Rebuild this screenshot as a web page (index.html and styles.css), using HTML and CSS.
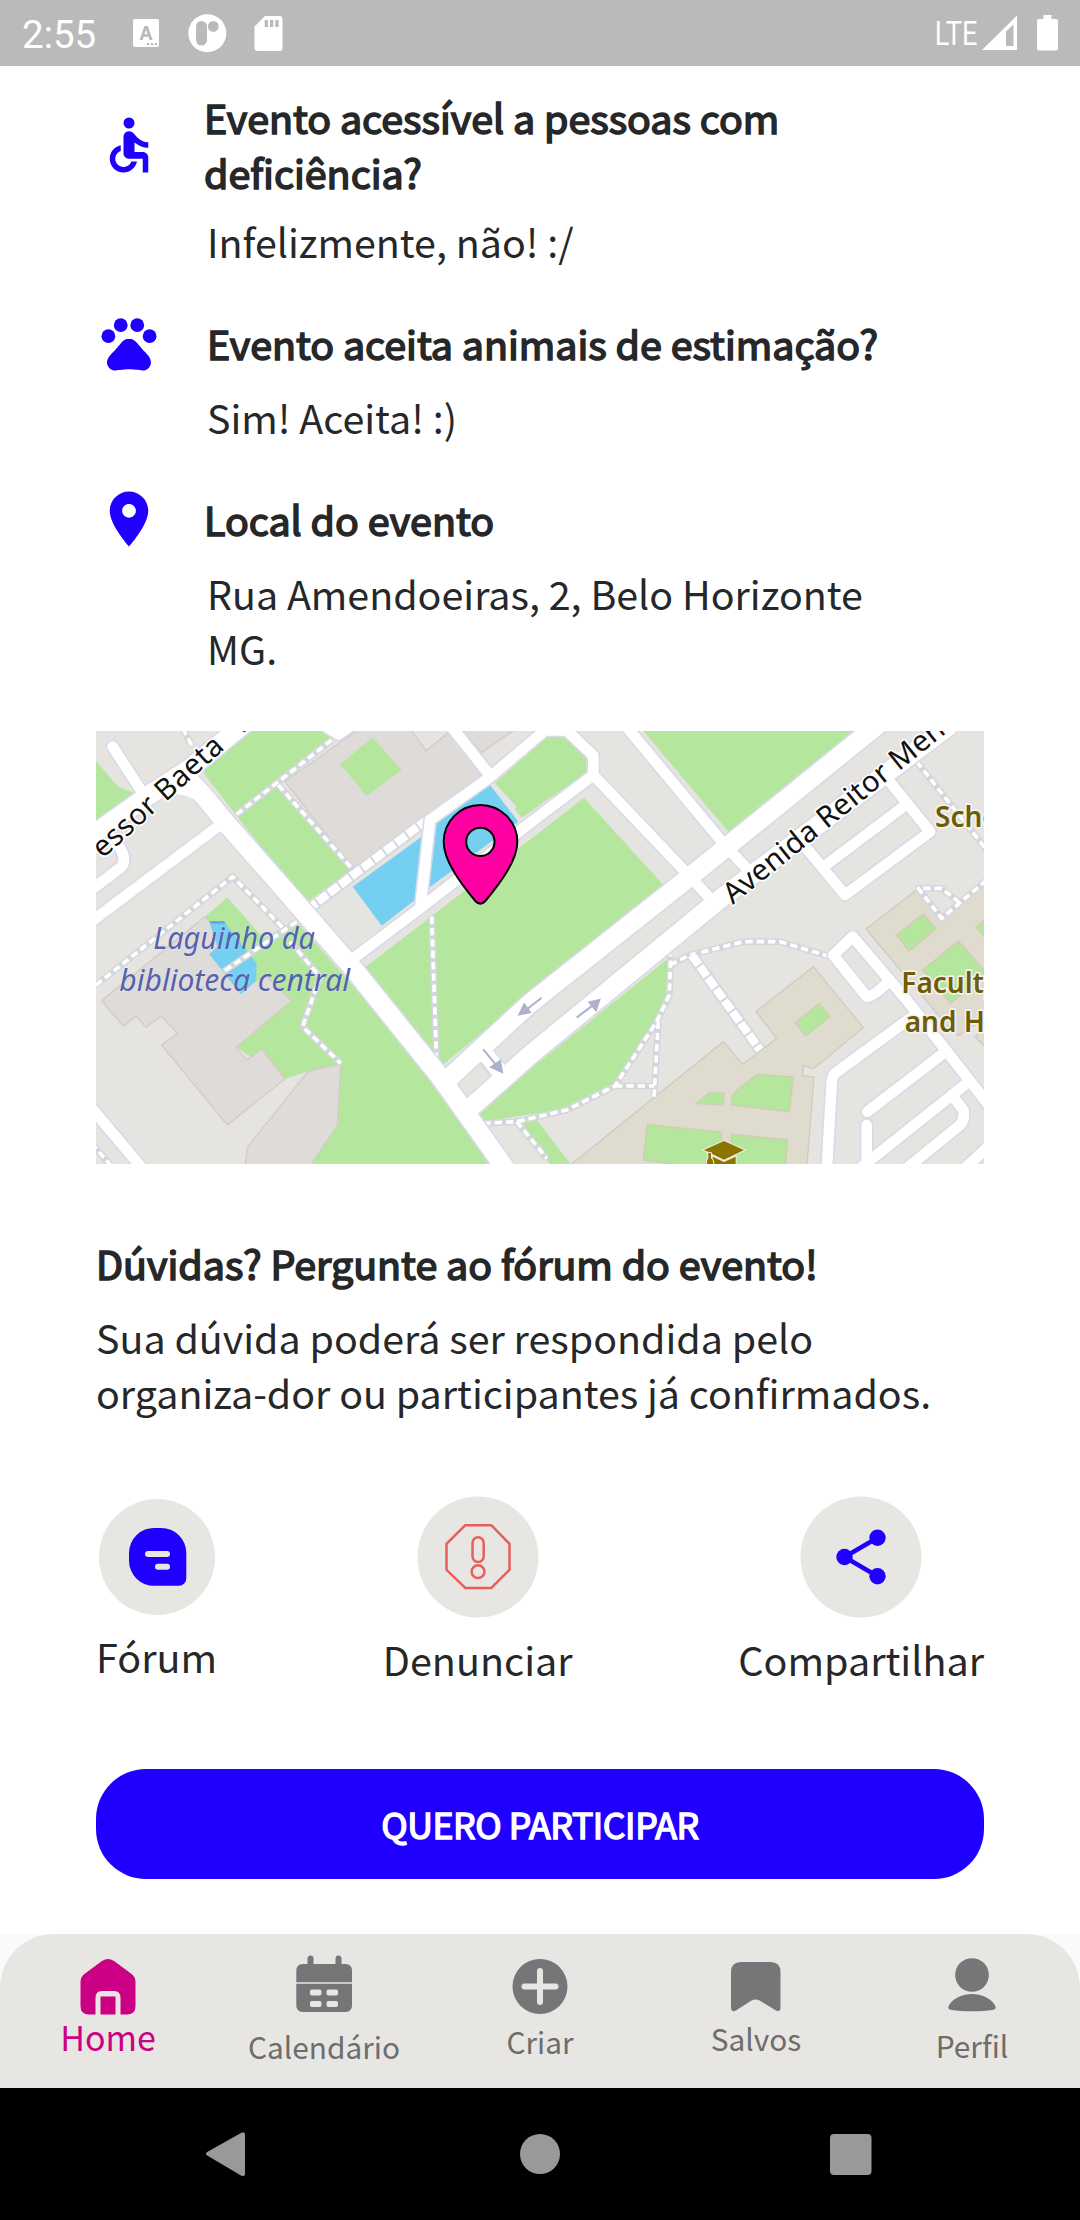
FILE: index.html
```html
<!DOCTYPE html>
<html lang="pt-BR">
<head>
<meta charset="utf-8">
<title>Evento</title>
<link rel="stylesheet" href="styles.css">
</head>
<body>
<header class="status">
  <span class="clock">2:55</span>
  <svg class="status-icons" viewBox="133 12 152 42" width="152" height="42" fill="#fff">
    <path fill-rule="evenodd" d="M135 19h22a2 2 0 0 1 2 2v24a2 2 0 0 1-2 2h-22a2 2 0 0 1-2-2V21a2 2 0 0 1 2-2zM144.500 26l-5 14h3.200l1-3.200h4.800l1 3.200h3.200l-5-14zM146 29.500l1.500 4.800h-3zM147 43v2.200h2.200V43zM151 43v2.200h2.200V43zM155 43v2.200h2V43z"/>
    <path fill-rule="evenodd" d="M207.300 14.300a19 19 0 1 1 0 38 19 19 0 0 1 0-38zM201.500 21a5.500 5.500 0 0 0-5.500 5.500v13.500a5.500 5.500 0 0 0 11 0V26.500a5.500 5.500 0 0 0-5.500-5.500zM213.300 21a5.400 5.400 0 1 0 0 10.800 5.400 5.400 0 0 0 0-10.800z"/>
    <path fill-rule="evenodd" d="M265 16h14.500a3 3 0 0 1 3 3v29a3 3 0 0 1-3 3h-22a3 3 0 0 1-3-3V26.500zM264.700 20v7h3.300v-7zM270 20v7h3.300v-7zM275.300 20v7h3.300v-7z"/>
  </svg>
  <span class="lte">LTE</span>
  <svg class="signal" viewBox="982 12 78 42" width="78" height="42" fill="#fff">
    <path fill-rule="evenodd" d="M1017 15.500V50H982zM1013.500 24.500L1006 31.500V46h7.500z"/>
    <path d="M1043.500 15h8v4h4.500a2 2 0 0 1 2 2v27.500a2 2 0 0 1-2 2h-17a2 2 0 0 1-2-2V21a2 2 0 0 1 2-2h4.500z"/>
  </svg>
</header>

<main class="content">
  <section class="info access">
    <svg class="info-icon" viewBox="0 0 24 24"><circle cx="12" cy="4" r="2"/><path d="M19 13v-2c-1.540.020-3.090-.750-4.070-1.830l-1.290-1.430c-.170-.190-.380-.340-.610-.450-.010 0-.010-.010-.020-.010H13c-.350-.200-.750-.300-1.190-.260C10.760 7.110 10 8.040 10 9.090V15c0 1.100.900 2 2 2h5v5h2v-5.500c0-1.100-.900-2-2-2h-3v-3.450c1.290 1.070 3.250 1.940 5 1.950zm-6.170 5c-.410 1.160-1.520 2-2.830 2-1.660 0-3-1.340-3-3 0-1.310.840-2.410 2-2.830V12.100c-2.280.460-4 2.480-4 4.900 0 2.760 2.240 5 5 5 2.420 0 4.440-1.720 4.900-4h-2.070z"/></svg>
    <div class="info-text">
      <h2 class="title">Evento acessível a pessoas com<br>deficiência?</h2>
      <p class="text">Infelizmente, não! :/</p>
    </div>
  </section>
  <section class="info pets">
    <svg class="info-icon" viewBox="0 0 24 24"><circle cx="4.500" cy="9.500" r="2.500"/><circle cx="9" cy="5.500" r="2.500"/><circle cx="15" cy="5.500" r="2.500"/><circle cx="19.500" cy="9.500" r="2.500"/><path d="M17.340 14.860c-.870-1.020-1.600-1.890-2.480-2.910-.460-.540-1.050-1.080-1.750-1.320-.110-.040-.220-.070-.330-.090-.250-.040-.520-.040-.780-.040s-.530 0-.790.050c-.110.020-.220.050-.330.090-.700.240-1.280.780-1.750 1.320-.870 1.020-1.600 1.890-2.480 2.910-1.310 1.310-2.920 2.760-2.620 4.790.290 1.020 1.020 2.030 2.330 2.320.730.150 3.060-.440 5.540-.440h.180c2.480 0 4.810.580 5.540.440 1.310-.290 2.040-1.310 2.330-2.320.310-2.040-1.300-3.490-2.610-4.800z"/></svg>
    <div class="info-text">
      <h2 class="title inset">Evento aceita animais de estimação?</h2>
      <p class="text">Sim! Aceita! :)</p>
    </div>
  </section>
  <section class="info place">
    <svg class="info-icon" viewBox="0 0 24 24"><path d="M12 2C8.130 2 5 5.130 5 9c0 5.250 7 13 7 13s7-7.750 7-13c0-3.870-3.130-7-7-7zm0 9.500c-1.380 0-2.500-1.120-2.500-2.500s1.120-2.500 2.500-2.500 2.500 1.120 2.500 2.500-1.120 2.500-2.500 2.500z"/></svg>
    <div class="info-text">
      <h2 class="title">Local do evento</h2>
      <p class="text">Rua Amendoeiras, 2, Belo Horizonte<br>MG.</p>
    </div>
  </section>

  <svg class="map" viewBox="18 18 2664 1299" width="888" height="433">
    <rect width="2700" height="1340" fill="#e5e4e0"/>
    <g class="green">
      <path d="M460 18H700L730 45 440 272 345 150 340 125zM440 272L570 180 785 435 645 535zM18 108L85 185 130 203 18 300zM1482 218L1720 480 1045 1030 815 735 1120 500zM1660 18H2290L1915 320zM1368 36H1425L1490 100V142L1295 278 1215 175z"/>
      <path d="M345 575L412 518 520 640 620 590 1050 1080 1200 1317H660L742 1200 752 1018 655 1038 585 1062 438 967 605 827zM1155 1165L1735 700 1728 810 1700 890 1575 1080 1440 1150 1180 1190zM1290 1195L1340 1185 1442 1317H1380z"/>
    </g>
    <g class="building">
      <path d="M585 170L810 10H960L1008 77 1078 20 1182 150 790 432zM1110 10H1280L1175 82z"/>
      <path d="M345 575L605 827 438 967 470 1005 515 972 585 1062 412 1200 215 960 263 925 213 873 168 907 138 873 100 903 35 827z"/>
      <path d="M655 1038L752 1018 742 1200 655 1330H465L473 1265z"/>
    </g>
    <path class="green" d="M345 575L412 518 520 640 620 590 720 740 605 827 540 740 500 770 440 690 400 640z"/>
    <path class="green" d="M848 38L935 135 830 212 750 118z"/>
    <g transform="translate(1320 0)">
      <g class="campus">
        <path d="M125 1317L375 1115 580 950 638 1018 740 940 678 860 850 725 1000 908 850 1032 820 1020 817 1052 852 1056 830 1330H110z"/>
        <path d="M1008 612L1165 490 1235 580 1380 470V870L1285 932 1250 900zM1335 935L1380 980V900z"/>
      </g>
      <g class="lawn">
        <path d="M795 895L868 835 900 875 828 932zM683 1047L790 1056 778 1160 603 1140 610 1105zM500 1135L538 1103 583 1105 578 1140zM352 1198L575 1222V1330H500L340 1305zM604 1227L773 1245 765 1330H604z"/>
        <path d="M1100 630L1180 567 1218 612 1137 678zM1338 607L1370 580V640zM1178 735L1285 648 1370 745 1262 835z"/>
      </g>
    </g>
    <g fill="#75cff0">
      <path d="M358 590H402L500 715 498 768 452 808 358 688 382 665z"/>
      <path d="M788 485L995 335 975 525 875 602zM1040 295L1200 180 1285 290 1015 490z"/>
      <path d="M358 588H402L408 596H362z" fill="#6aa5f0"/>
    </g>
    <path d="M1215 185L1275 250" stroke="#e5e4ea" stroke-width="14"/>

    <defs>
      <g id="paths">
        <path d="M725 45L440 268M565 180L790 435M278 10L305 60M18 780L428 455 580 610M620 590L400 740M600 650L690 755 638 905 752 1015M1025 575L1040 1020"/>
        <path d="M1180 1195L1280 1190 1430 1155 1575 1083 1700 890 1738 810 1742 690M1575 1083H1692M1692 1115L1705 890M1280 1190L1370 1300M5 1255L70 1330"/>
        <path d="M1740 720L1800 690 1960 650H2070L2220 695M2480 110L2690 375M2690 465L2555 580 2485 490H2555L2605 530"/>
      </g>
      <g id="plaza"><path d="M650 555L1010 285M1805 690L2010 975"/></g>
      <g id="lanes">
        <path d="M68 65L165 215M-10 600L390 300M-10 505L95 425Q110 405 92 372L70 340M-20 1120L165 1340"/>
        <path d="M1080 0L1195 145M1020 285L992 540M780 708L1000 542 1325 290 1510 150M1020 285L1195 160 1365 16H1430L1510 92V150L1800 455 1860 520M1605 0L1900 355 1970 430"/>
        <path d="M2395 165L2520 320 2265 510 2150 370M2215 415L2440 245M2288 635L2230 690 2330 815Q2350 815 2390 775M2288 635L2450 825 2700 1145"/>
        <path d="M2460 880L2235 1045Q2225 1055 2225 1075L2210 1340M2560 985L2332 1160M2630 1075L2310 1330M2330 1200V1340M2585 1110L2620 1155Q2625 1185 2610 1200L2450 1330M2700 1260L2630 1325M700 0L745 28 800-10"/>
      </g>
      <g id="roads">
        <path d="M-20 350L170 215 300 130 470 -10M290 160Q325 190 400 285L650 570 785 725 1050 1055 1260 1350M1060 1075L1320 835 1800 455 2375 -10M1140 1150L1320 990 1880 530 2580 0"/>
      </g>
    </defs>
    <use href="#paths" class="path-case"/><use href="#paths" class="path-fill"/>
    <use href="#plaza" class="plaza-case"/><use href="#plaza" class="plaza-fill"/>
    <use href="#lanes" class="lane-case"/><use href="#roads" class="road-case"/>
    <path d="M1165 965L1255 1075" stroke="#d8dae8" stroke-width="60"/>
    <use href="#lanes" class="lane-fill"/><use href="#roads" class="road-fill"/>
    <path d="M1165 960L1260 1080" stroke="#fff" stroke-width="48"/>
    <path d="M240 190L310 130 345 190 400 270 330 235Q290 205 240 205z" fill="#fff"/>

    <g stroke="#adb1cb" stroke-width="6" fill="#adb1cb">
      <path d="M1355 818L1305 857M1180 973L1222 1025M1460 878L1512 838"/>
      <path d="M1288 868L1303 838 1320 862zM1236 1041L1204 1026 1230 1008zM1528 825L1498 832 1518 856z"/>
    </g>
    <g transform="translate(1320 0)" fill="#8a7500" stroke="#f2efe6" stroke-width="6" paint-order="stroke">
      <path d="M522 1275L582 1248 642 1275 582 1304zM548 1295L582 1311 617 1295V1330H548z"/>
      <path d="M535 1283V1300Q528 1306 532 1330H550Q552 1306 543 1300V1285z"/>
    </g>
    <g class="map-street">
      <text x="38" y="402" transform="rotate(-42 38 402)" textLength="496">essor Baeta</text>
      <text x="446" y="36" transform="rotate(-40 446 36)">V</text>
      <text x="1928" y="540" transform="rotate(-38.800 1928 540)" textLength="825">Avenida Reitor Men</text>
    </g>
    <g class="map-water">
      <text x="190" y="672" textLength="485" lengthAdjust="spacingAndGlyphs">Laguinho da</text>
      <text x="88" y="798" textLength="692" lengthAdjust="spacingAndGlyphs">biblioteca central</text>
    </g>
    <g class="map-poi">
      <text x="2535" y="307">School</text>
      <text x="2434" y="803">Faculty</text>
      <text x="2444" y="920">and Hu</text>
    </g>
    <path d="M1171 240C1110 240 1061 290 1061 350 1061 405 1108 470 1156 528Q1171 545 1186 528C1234 470 1282 405 1282 350 1282 290 1232 240 1171 240zM1171 308a42.500 42.500 0 1 1 0 85 42.500 42.500 0 0 1 0-85z" fill="#ff00a2" fill-rule="evenodd" stroke="#000" stroke-width="6"/>
  </svg>

  <section class="forum">
    <h2 class="title">Dúvidas? Pergunte ao fórum do evento!</h2>
    <p class="text">Sua dúvida poderá ser respondida pelo<br>organiza-dor ou participantes já confirmados.</p>
  </section>

  <nav class="actions">
    <a class="action small">
      <svg viewBox="99 1499 116 116" width="116" height="116"><circle cx="157" cy="1557" r="58" fill="#e8e6e2"/><path fill="#1f00ff" d="M155 1528h6a25 25 0 0 1 25.300 25v25a7.500 7.500 0 0 1-7.500 7.800H154a25 25 0 0 1-25-25V1553a25 25 0 0 1 26-25z"/><path d="M148 1554h19M158 1566.700h9" stroke="#e8e6e2" stroke-width="6" stroke-linecap="round"/></svg>
      <span>Fórum</span>
    </a>
    <a class="action">
      <svg viewBox="416 1496 122 122" width="122" height="122"><circle cx="477" cy="1557" r="60.500" fill="#e8e6e2"/><g fill="none" stroke="#e65f5c" stroke-width="2.500"><path d="M464.300 1525.200h26l18.200 18.600v26l-18.200 18.200h-26l-18.800-18.200v-26z"/><rect x="471.500" y="1537.300" width="11.200" height="24.700" rx="5.600"/><circle cx="477" cy="1571.700" r="6.400"/></g></svg>
      <span>Denunciar</span>
    </a>
    <a class="action">
      <svg viewBox="799 1496 122 122" width="122" height="122"><circle cx="860" cy="1557" r="60.500" fill="#e8e6e2"/><g fill="#1f00ff"><circle cx="843.500" cy="1557" r="8.200"/><circle cx="876.500" cy="1537.700" r="8.200"/><circle cx="876.500" cy="1576.200" r="8.200"/></g><path d="M876.500 1537.700L843.500 1557l33 19.200" fill="none" stroke="#1f00ff" stroke-width="4.500"/></svg>
      <span>Compartilhar</span>
    </a>
  </nav>

  <button class="join">QUERO PARTICIPAR</button>
</main>

<footer class="tabs-wrap">
  <nav class="tabs">
    <a class="tab home">
      <svg viewBox="0 0 56 56"><path d="M28 0q3 0 6 2l17 12.500q4.500 3.500 4.500 8V47q0 8.500-8.500 8.500H40.500V39q0-7-6.500-7H22q-6.500 0-6.500 7v16.500H9Q.500 55.500.500 47V22.500q0-4.500 4.500-8L22 2q3-2 6-2z"/><path d="M20.500 37.500h15v18h-15z"/></svg>
      <span>Home</span>
    </a>
    <a class="tab calendar">
      <svg viewBox="0 0 56 58"><path d="M11.500 9V3.500a3 3 0 0 1 6 0V9h22V3.500a3 3 0 0 1 6 0V9H50a6 6 0 0 1 6 6v12.200H.300V15a6 6 0 0 1 6-6z"/><path fill-rule="evenodd" d="M.300 28.800H56V51a6 6 0 0 1-6 6H6.300a6 6 0 0 1-6-6zM16 34.500q-2 0-2 2v2q0 2 2 2h7.500q2 0 2-2v-2q0-2-2-2zM32.500 34.500q-2 0-2 2v2q0 2 2 2H40q2 0 2-2v-2q0-2-2-2zM16 46q-2 0-2 2v2q0 2 2 2h7.500q2 0 2-2v-2q0-2-2-2zM32.500 46q-2 0-2 2v2q0 2 2 2H40q2 0 2-2v-2q0-2-2-2z"/></svg>
      <span>Calendário</span>
    </a>
    <a class="tab create">
      <svg viewBox="0 0 56 56"><circle cx="28" cy="27.500" r="27.500"/><path d="M12.500 27.500h31M28 12v31" stroke="#e8e6e2" stroke-width="6" stroke-linecap="round"/></svg>
      <span>Criar</span>
    </a>
    <a class="tab saved">
      <svg viewBox="0 0 50 50"><path d="M10 0h29.500q10 0 10 10v35.500q0 5-4.500 3l-16.500-10q-4-2-8 0L5 48.500q-4.500 2.500-5-3V10Q0 0 10 0z"/></svg>
      <span>Salvos</span>
    </a>
    <a class="tab profile">
      <svg viewBox="0 0 50 54"><circle cx="25" cy="17" r="16.800"/><path d="M25 36c11 0 20 5 23.300 12 1 2 .200 3.300-1.800 3.700-13 2.200-30 2.200-43 0-2-.400-2.800-1.700-1.800-3.700C5 41 14 36 25 36z"/></svg>
      <span>Perfil</span>
    </a>
  </nav>
</footer>
<div class="system">
  <svg viewBox="206 2132 666 46" width="666" height="46" fill="#999"><path d="M208 2151.500l33-18.500q4-2 4 2v38.500q0 4-4 2l-33-19.500q-4-2.500 0-4.500z"/><circle cx="540" cy="2154" r="20"/><rect x="830" y="2134" width="41.500" height="41" rx="4"/></svg>
</div>
</body>
</html>
```
FILE: styles.css
```css
* { box-sizing: border-box; }
body {
  margin: 0;
  width: 1080px;
  height: 2220px;
  display: flex;
  flex-direction: column;
  background: #fff;
  color: #262729;
  font-family: "Noto Sans CJK JP", "Noto Sans", sans-serif;
  overflow: hidden;
}
svg { display: block; flex: none; }
h2, p { margin: 0; }

.status {
  height: 66px;
  flex: none;
  display: flex;
  align-items: center;
  padding: 0 20px 0 22px;
  background: #bababa;
  color: #fff;
  font-family: Roboto, sans-serif;
}
.clock { width: 111px; font-size: 38.500px; line-height: 66px; padding-top: 3px; }
.lte { margin-left: auto; margin-right: 5px; font-size: 34px; transform: scaleX(.8); transform-origin: right; }

.content {
  height: 1868px;
  flex: none;
  padding: 23px 96px 0;
}
.info { display: flex; gap: 42px; }
.info-icon { width: 66px; height: 66px; fill: #1f00ff; }
.info-text { flex: 1; }
.title, .text { font-size: 39.400px; line-height: 55px; font-weight: 400; white-space: nowrap; }
.title { -webkit-text-stroke: 1.600px #262729; }
.title.inset { padding-left: 3px; }
.info .text { padding: 19px 0 0 3px; }
.access .info-icon { margin-top: 23px; }
.access .text { padding-top: 14px; }
.pets { padding-top: 47px; }
.pets .info-icon { margin-top: -5px; }
.place { padding-top: 47px; }
.place .info-icon { margin-top: -5px; }
.map { margin-top: 56px; }

.green { fill: #b5e69d; }
.building { fill: #dfdbd8; stroke: #d0cdca; stroke-width: 4; }
.campus { fill: #e0dbcf; stroke: #cfcbc0; stroke-width: 4; }
.lawn { fill: #b5e69d; stroke: #cfcdb4; stroke-width: 4; }
.path-case, .path-fill, .plaza-case, .plaza-fill, .lane-case, .lane-fill, .road-case, .road-fill { fill: none; stroke-linejoin: round; }
.path-case { stroke: #d3d7dc; stroke-width: 20; }
.path-fill { stroke: #fff; stroke-width: 11; stroke-dasharray: 22 12; }
.plaza-case { stroke: #d5d7e2; stroke-width: 36; }
.plaza-fill { stroke: #fff; stroke-width: 25; stroke-dasharray: 36 6; }
.lane-case { stroke: #d8dae8; stroke-width: 42; stroke-linecap: round; }
.lane-fill { stroke: #fff; stroke-width: 32; stroke-linecap: round; }
.road-case { stroke: #d8dae8; stroke-width: 66; }
.road-fill { stroke: #fff; stroke-width: 56; }
.map-street, .map-water, .map-poi { font-family: "Noto Sans", sans-serif; paint-order: stroke; stroke-linejoin: round; }
.map-street { font-size: 88px; fill: #111; stroke: #fff; stroke-width: 10; }
.map-water { font-size: 90px; font-style: italic; fill: #5462ae; stroke: #ffffff55; stroke-width: 3; }
.map-poi { font-size: 84px; font-weight: 600; fill: #6d5c08; stroke: #f4f2ec; stroke-width: 10; }

.forum { padding-top: 71px; }
.forum .text { padding-top: 19px; }

.actions {
  display: flex;
  justify-content: space-between;
  align-items: flex-start;
  margin-top: 77px;
  height: 273px;
}
.action { display: flex; flex-direction: column; align-items: center; gap: 13px; font-size: 39.500px; line-height: 55px; }
.action.small { padding-top: 3px; }

.join {
  display: flex;
  align-items: center;
  justify-content: center;
  width: 888px;
  height: 110px;
  padding: 0;
  border: 0;
  border-radius: 50px;
  background: #1f00ff;
  color: #fff;
  font: 400 35.600px/60px "Noto Sans CJK JP", sans-serif;
  letter-spacing: -.400px;
  -webkit-text-stroke: 1.500px #fff;
}

.tabs-wrap { height: 154px; flex: none; background: #fafafa; }
.tabs {
  height: 154px;
  display: grid;
  grid-template-columns: repeat(5, 216px);
  background: #e8e6e2;
  border-radius: 54px 54px 0 0;
  color: #6d6d6c;
}
.tab { display: flex; flex-direction: column; align-items: center; font-size: 29.800px; line-height: 40px; }
.tab svg { fill: #757678; }
.home { padding-top: 25px; gap: 2px; color: #cc0084; font-size: 34px; }
.home svg { width: 56px; height: 56px; fill: #cc0084; }
.calendar { padding-top: 21px; gap: 13px; }
.calendar svg { width: 56px; height: 58px; }
.create { padding-top: 25px; gap: 6px; }
.create svg { width: 56px; height: 56px; }
.saved { padding-top: 28px; gap: 6px; }
.saved svg { width: 50px; height: 50px; }
.profile { padding-top: 24px; gap: 13px; }
.profile svg { width: 50px; height: 54px; }

.system { height: 132px; flex: none; background: #000; padding: 44px 0 0 206px; }
```
